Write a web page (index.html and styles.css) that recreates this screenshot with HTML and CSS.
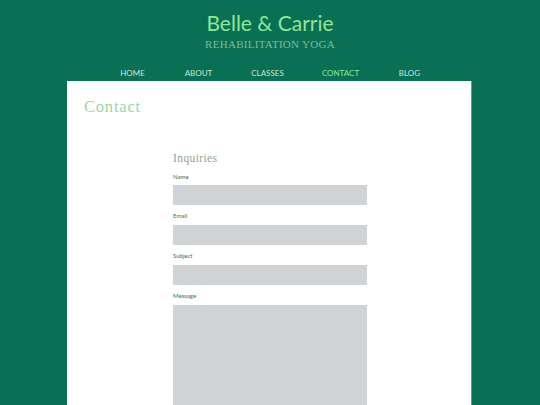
FILE: index.html
```html
<!DOCTYPE html>
<html>
<head>
<meta charset="utf-8">
<link rel="stylesheet" href="styles.css">
</head>
<body>
<header class="header">
  <h1 class="title">Belle &amp; Carrie</h1>
  <div class="subtitle">REHABILITATION YOGA</div>
  <nav class="nav">
    <a class="nav-item">HOME</a>
    <a class="nav-item">ABOUT</a>
    <a class="nav-item">CLASSES</a>
    <a class="nav-item active">CONTACT</a>
    <a class="nav-item">BLOG</a>
  </nav>
</header>
<main class="panel">
  <h2 class="page-title">Contact</h2>
  <form class="form">
    <h3 class="form-title">Inquiries</h3>
    <label class="label first">Name</label>
    <div class="field"></div>
    <label class="label">Email</label>
    <div class="field"></div>
    <label class="label">Subject</label>
    <div class="field"></div>
    <label class="label">Message</label>
    <div class="field textarea"></div>
  </form>
</main>
</body>
</html>
```
FILE: styles.css
```css
html, body {
  margin: 0;
  padding: 0;
}
body {
  background: #0a7053;
  font-family: Lato, "Liberation Sans", sans-serif;
  height: 405px;
  overflow: hidden;
}
.header {
  display: flex;
  flex-direction: column;
  align-items: center;
}
.title {
  margin: 10px 0 0 0;
  font-family: Lato, sans-serif;
  font-weight: 400;
  font-size: 21px;
  line-height: 26px;
  color: #8fe59b;
}
.subtitle {
  margin-top: 1px;
  font-family: "Liberation Serif", serif;
  font-weight: 400;
  font-size: 11px;
  letter-spacing: 0.3px;
  line-height: 14px;
  color: #7fb99c;
}
.nav {
  display: flex;
  margin-top: 17px;
  width: 405px;
  height: 13px;
}
.nav-item {
  font-size: 8px;
  line-height: 10px;
  color: #c7e6d8;
  text-align: center;
}
.nav-item:nth-child(1) { width: 66px; margin-left: 32px; }
.nav-item:nth-child(2) { width: 66px; }
.nav-item:nth-child(3) { width: 72px; }
.nav-item:nth-child(4) { width: 74px; }
.nav-item:nth-child(5) { width: 64px; }
.nav-item.active { color: #8fe59b; }
.panel {
  background: #fff;
  width: 405px;
  margin: 0 0 0 67px;
  height: 330px;
  padding-top: 1px;
  box-sizing: border-box;
  border-right: 1px solid #5aa58a;
}
.page-title {
  margin: 15px 0 0 17px;
  font-family: "Liberation Serif", serif;
  font-weight: 400;
  font-size: 16.5px;
  letter-spacing: 0.8px;
  line-height: 20px;
  color: #9ad7a2;
}
.form {
  margin: 34px 0 0 106px;
  width: 194px;
  display: flex;
  flex-direction: column;
}
.form-title {
  margin: 0;
  font-family: "Liberation Serif", serif;
  font-weight: 400;
  font-size: 11.5px;
  letter-spacing: 0.4px;
  line-height: 14px;
  color: #939f9b;
}
.label {
  margin-top: 7px;
  font-size: 6px;
  line-height: 8px;
  color: #3e6a5e;
}
.label.first { margin-top: 8px; }
.field {
  margin-top: 5px;
  height: 20px;
  background: #d2d3d4;
}
.label.first + .field { margin-top: 4px; }
.textarea {
  height: 120px;
}
```
